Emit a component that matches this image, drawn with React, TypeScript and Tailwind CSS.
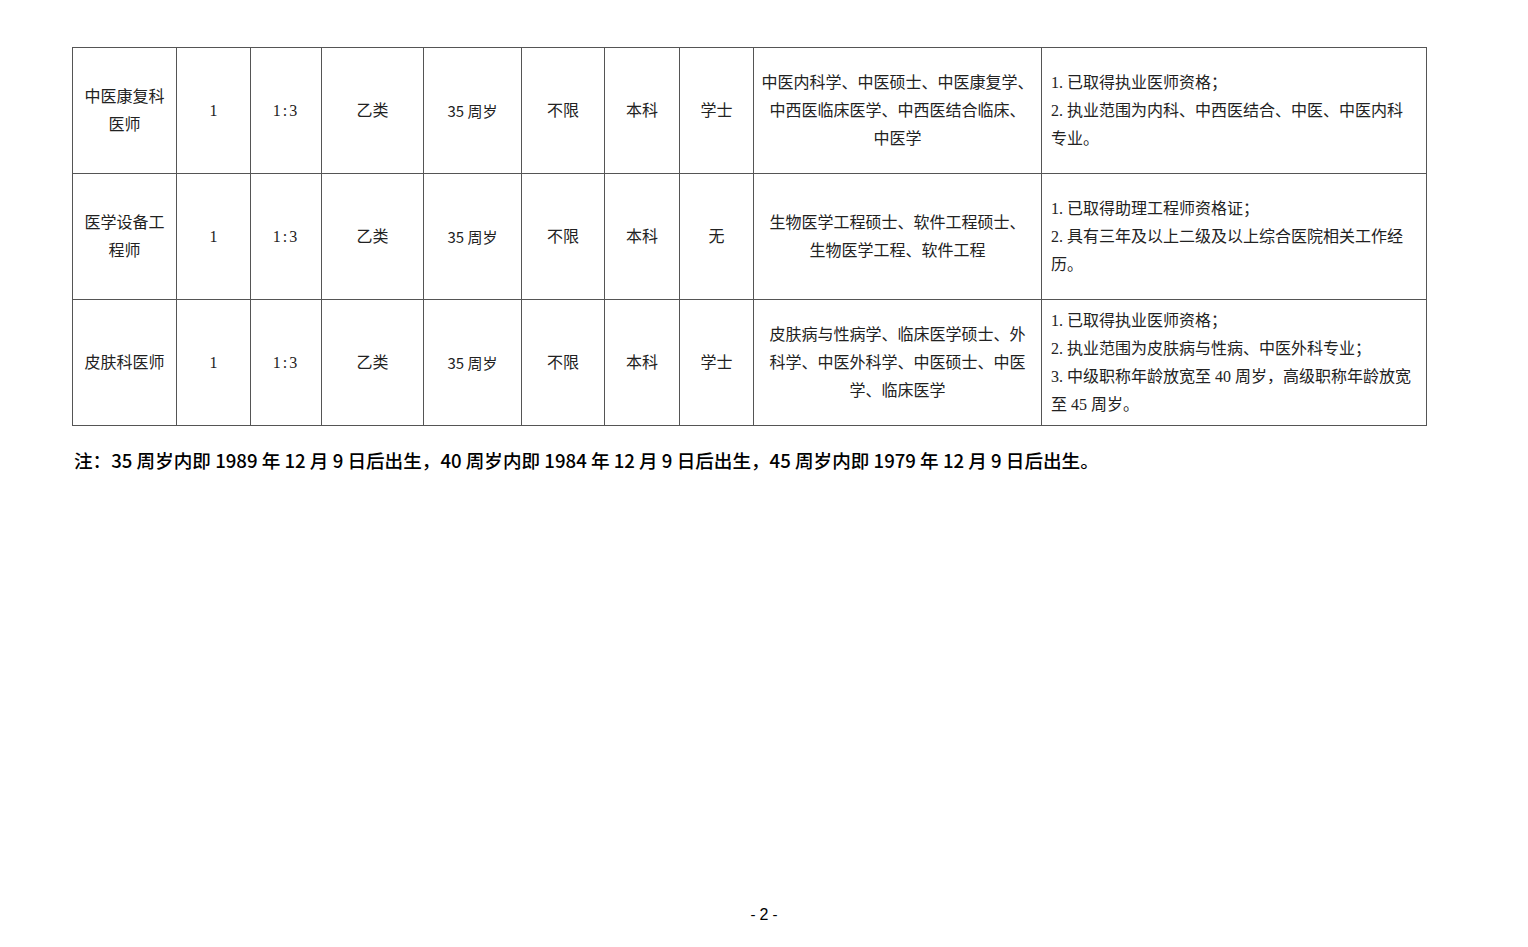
import React from "react";

type Row = {
  name: string[];
  num: string;
  ratio: string;
  cls: string;
  age: string;
  a: string;
  edu: string;
  deg: string;
  major: string[];
  req: string[];
};

const rows: Row[] = [
  {
    name: ["中医康复科", "医师"],
    num: "1",
    ratio: "1:3",
    cls: "乙类",
    age: "35 周岁",
    a: "不限",
    edu: "本科",
    deg: "学士",
    major: ["中医内科学、中医硕士、中医康复学、", "中西医临床医学、中西医结合临床、", "中医学"],
    req: ["1. 已取得执业医师资格；", "2. 执业范围为内科、中西医结合、中医、中医内科", "专业。"],
  },
  {
    name: ["医学设备工", "程师"],
    num: "1",
    ratio: "1:3",
    cls: "乙类",
    age: "35 周岁",
    a: "不限",
    edu: "本科",
    deg: "无",
    major: ["生物医学工程硕士、软件工程硕士、", "生物医学工程、软件工程"],
    req: ["1. 已取得助理工程师资格证；", "2. 具有三年及以上二级及以上综合医院相关工作经", "历。"],
  },
  {
    name: ["皮肤科医师"],
    num: "1",
    ratio: "1:3",
    cls: "乙类",
    age: "35 周岁",
    a: "不限",
    edu: "本科",
    deg: "学士",
    major: ["皮肤病与性病学、临床医学硕士、外", "科学、中医外科学、中医硕士、中医", "学、临床医学"],
    req: [
      "1. 已取得执业医师资格；",
      "2. 执业范围为皮肤病与性病、中医外科专业；",
      "3. 中级职称年龄放宽至 40 周岁，高级职称年龄放宽",
      "至 45 周岁。",
    ],
  },
];

const serif = { fontFamily: '"Liberation Serif", "Noto Sans CJK SC", serif' };
const sans = { fontFamily: '"Noto Sans CJK SC", sans-serif' };

export default function App() {
  const td = "border border-[#555] text-center align-middle";
  return (
    <div className="w-[1528px] h-[947px] bg-white relative text-[#222]" style={serif}>
      <div className="pt-[47px] pl-[72px]">
        <table className="border-collapse table-fixed w-[1355px] text-[16px] leading-[28px]">
          <colgroup>
            <col className="w-[104px]" />
            <col className="w-[74px]" />
            <col className="w-[71px]" />
            <col className="w-[102px]" />
            <col className="w-[98px]" />
            <col className="w-[83px]" />
            <col className="w-[75px]" />
            <col className="w-[74px]" />
            <col className="w-[288px]" />
            <col className="w-[385px]" />
          </colgroup>
          <tbody>
            {rows.map((r, i) => (
              <tr key={i} className="h-[126px]">
                <td className={`${td} px-[4px]`}>
                  {r.name.map((l, j) => (
                    <div key={j} className="whitespace-nowrap">{l}</div>
                  ))}
                </td>
                <td className={td}>{r.num}</td>
                <td className={td}>
                  <span className="tracking-[2px]">{r.ratio}</span>
                </td>
                <td className={td}>{r.cls}</td>
                <td className={td} style={sans}>
                  <span className="text-[15px]">{r.age}</span>
                </td>
                <td className={td}>{r.a}</td>
                <td className={td}>{r.edu}</td>
                <td className={td}>{r.deg}</td>
                <td className={`${td} px-[2px]`}>
                  {r.major.map((l, j) => (
                    <div key={j} className="whitespace-nowrap">{l}</div>
                  ))}
                </td>
                <td className="border border-[#555] text-left align-middle pl-[9px] pr-[4px]">
                  {r.req.map((l, j) => (
                    <div key={j} className="whitespace-nowrap">{l}</div>
                  ))}
                </td>
              </tr>
            ))}
          </tbody>
        </table>
        <div
          className="mt-[22px] ml-[2px] text-[18.6px] leading-[24px] font-medium text-black"
          style={sans}
        >
          注：35 周岁内即 1989 年 12 月 9 日后出生，40 周岁内即 1984 年 12 月 9 日后出生，45 周岁内即 1979 年 12 月 9 日后出生。
        </div>
      </div>
      <div
        className="absolute left-0 right-0 top-[903px] text-center text-[15px] text-black"
        style={{ fontFamily: '"Liberation Sans", sans-serif' }}
      >
        - <span className="text-[16px]">2</span> -
      </div>
    </div>
  );
}
